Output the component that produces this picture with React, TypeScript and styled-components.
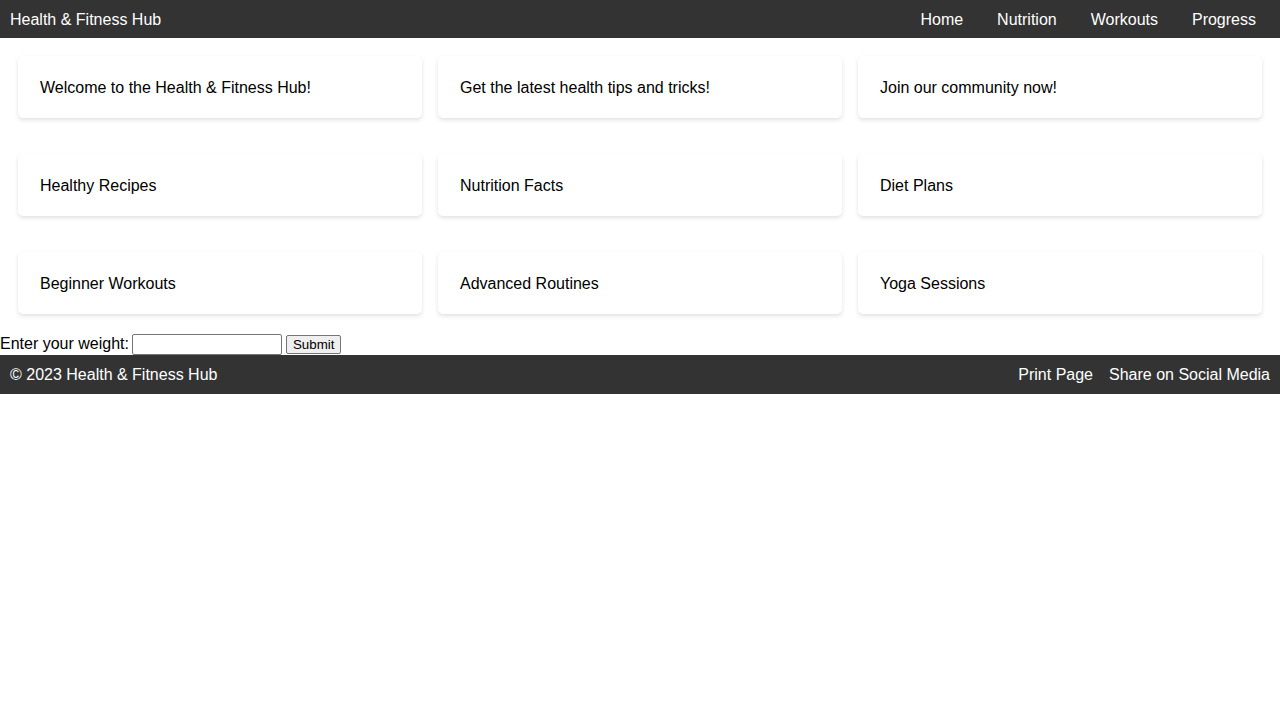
import React from "react";
import styled, { createGlobalStyle } from "styled-components";

const Global = createGlobalStyle`
  html, body { margin: 0; padding: 0; background: #ffffff; }
  body { font-family: "Liberation Sans", Arial, sans-serif; font-size: 16px; color: #000; line-height: normal; }
`;

const Header = styled.header`
  display: flex;
  justify-content: space-between;
  align-items: center;
  background: #333333;
  color: #ffffff;
  padding: 10px 8px 10px 10px;
`;

const Brand = styled.div`
  font-size: 16px;
  transform: translateY(1px);
`;

const Nav = styled.nav`
  display: flex;
  gap: 2px;
  transform: translateY(1px);
`;

const NavLink = styled.a`
  color: #ffffff;
  text-decoration: none;
  padding: 0 16px;
  font-size: 16px;
`;

const Section = styled.section`
  display: flex;
  padding: 10px;
`;

const Card = styled.div`
  flex: 1;
  margin: 8px;
  padding: 23px 22px 21px 22px;
  background: #ffffff;
  border-radius: 5px;
  box-shadow: 0 2px 4px rgba(0, 0, 0, 0.12);
  font-size: 16px;
`;

const Form = styled.form`
  display: flex;
  align-items: center;
  height: 22px;
  padding-top: 1px;
`;

const Label = styled.label`
  margin-right: 3px;
  white-space: nowrap;
  font-size: 16px;
`;

const Input = styled.input`
  box-sizing: border-box;
  width: 150px;
  height: 21px;
  padding: 1px 2px;
  border: 1px solid #767676;
  border-radius: 2px;
  font-size: 13px;
`;

const SubmitBtn = styled.button`
  margin-left: 4px;
  font-family: "Liberation Sans", Arial, sans-serif;
  font-size: 13.33px;
  padding: 1px 6px;
  height: 19px;
  border: 1px solid #767676;
  border-radius: 2px;
  background: #efefef;
  color: #000;
`;

const Footer = styled.footer`
  display: flex;
  justify-content: space-between;
  align-items: center;
  background: #333333;
  color: #ffffff;
  padding: 11px 10px 10px 10px;
`;

const FooterText = styled.div``;

const FooterActions = styled.div`
  display: flex;
  align-items: center;
`;

const FooterAction = styled.a<{ $pad?: boolean }>`
  color: #ffffff;
  text-decoration: none;
  padding: 0 ${(p) => (p.$pad ? "16px" : "0")};
`;

const rows = [
  ["Welcome to the Health & Fitness Hub!", "Get the latest health tips and tricks!", "Join our community now!"],
  ["Healthy Recipes", "Nutrition Facts", "Diet Plans"],
  ["Beginner Workouts", "Advanced Routines", "Yoga Sessions"],
];

export default function App() {
  return (
    <>
      <Global />
      <Header>
        <Brand>Health &amp; Fitness Hub</Brand>
        <Nav>
          <NavLink href="#">Home</NavLink>
          <NavLink href="#">Nutrition</NavLink>
          <NavLink href="#">Workouts</NavLink>
          <NavLink href="#">Progress</NavLink>
        </Nav>
      </Header>
      {rows.map((row, i) => (
        <Section key={i}>
          {row.map((t) => (
            <Card key={t}>{t}</Card>
          ))}
        </Section>
      ))}
      <Form onSubmit={(e) => e.preventDefault()}>
        <Label htmlFor="w">Enter your weight:</Label>
        <Input id="w" type="text" />
        <SubmitBtn type="submit">Submit</SubmitBtn>
      </Form>
      <Footer>
        <FooterText>© 2023 Health &amp; Fitness Hub</FooterText>
        <FooterActions>
          <FooterAction href="#" $pad>Print Page</FooterAction>
          <FooterAction href="#">Share on Social Media</FooterAction>
        </FooterActions>
      </Footer>
    </>
  );
}
